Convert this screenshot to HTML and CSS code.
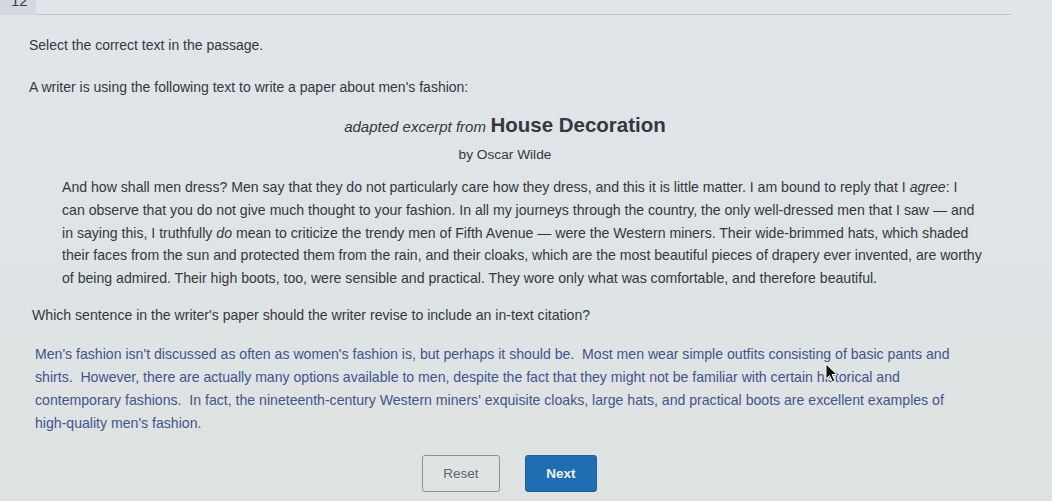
FILE: index.html
```html
<!DOCTYPE html>
<html lang="en">
<head>
<meta charset="utf-8">
<title>Select the correct text</title>
<link rel="stylesheet" href="styles.css">
</head>
<body>
<div class="topbar">
  <div class="qnum"><span class="qnum-text">12</span></div>
  <div class="rule"></div>
</div>
<main class="content">
  <p class="instr">Select the correct text in the passage.</p>
  <p class="intro">A writer is using the following text to write a paper about men's fashion:</p>
  <div class="source">
    <div class="title-line"><span class="adapted">adapted excerpt from</span> <span class="title">House Decoration</span></div>
    <div class="author">by Oscar Wilde</div>
  </div>
  <p class="passage">And how shall men dress? Men say that they do not particularly care how they dress, and this it is little matter. I am bound to reply that I <em>agree</em>: I<br>can observe that you do not give much thought to your fashion. In all my journeys through the country, the only well-dressed men that I saw — and<br>in saying this, I truthfully <em>do</em> mean to criticize the trendy men of Fifth Avenue — were the Western miners. Their wide-brimmed hats, which shaded<br>their faces from the sun and protected them from the rain, and their cloaks, which are the most beautiful pieces of drapery ever invented, are worthy<br>of being admired. Their high boots, too, were sensible and practical. They wore only what was comfortable, and therefore beautiful.</p>
  <p class="question">Which sentence in the writer's paper should the writer revise to include an in-text citation?</p>
  <div class="answer-wrap">
    <p class="answer"><span class="sent">Men's fashion isn't discussed as often as women's fashion is, but perhaps it should be.</span>&nbsp; <span class="sent">Most men wear simple outfits consisting of basic pants and<br>shirts.</span>&nbsp; <span class="sent">However, there are actually many options available to men, despite the fact that they might not be familiar with certain historical and<br>contemporary fashions.</span>&nbsp; <span class="sent">In fact, the nineteenth-century Western miners' exquisite cloaks, large hats, and practical boots are excellent examples of<br>high-quality men's fashion.</span></p>
    <svg class="cursor" width="14" height="20" viewBox="0 0 14 20"><path d="M1 1 L1 16 L4.5 12.5 L7.5 19 L10 18 L7 11.5 L12 11.5 Z" fill="#111" stroke="#fff" stroke-width="1"/></svg>
  </div>
  <div class="buttons">
    <button class="btn reset" type="button">Reset</button>
    <button class="btn next" type="button">Next</button>
  </div>
</main>
</body>
</html>
```
FILE: styles.css
```css
html, body {
  margin: 0;
  padding: 0;
}
body {
  width: 1052px;
  height: 501px;
  overflow: hidden;
  background: linear-gradient(180deg, #e1e5ea 0%, #dee3e5 60%, #dfe3e0 100%);
  font-family: "Liberation Sans", Arial, sans-serif;
  color: #33383d;
}
.topbar {
  display: flex;
  align-items: flex-end;
  height: 15px;
}
.qnum {
  width: 36px;
  height: 15px;
  background: #d3d9df;
  overflow: hidden;
  position: relative;
}
.qnum-text {
  position: absolute;
  left: 11px;
  bottom: 9px;
  font-size: 15px;
  line-height: 11px;
  color: #3a3f45;
}
.rule {
  width: 975px;
  height: 1px;
  background: #b9c1c9;
}
.content {
  padding: 0 0 0 29px;
}
p {
  margin: 0;
}
.instr {
  font-size: 14px;
  margin-top: 22px;
  line-height: 16px;
}
.intro {
  font-size: 14px;
  line-height: 16px;
  margin-top: 26px;
}
.source {
  text-align: center;
  width: 952px;
  margin-top: 18px;
}
.title-line {
  line-height: 24px;
}
.adapted {
  font-style: italic;
  font-size: 15px;
}
.title {
  font-weight: bold;
  font-size: 20.5px;
}
.author {
  font-size: 13.7px;
  line-height: 16px;
  margin-top: 8px;
}
.passage {
  font-size: 14.1px;
  line-height: 22.8px;
  margin-top: 13px;
  margin-left: 33px;
}
.question {
  font-size: 14.1px;
  line-height: 16px;
  margin-top: 17px;
  margin-left: 3px;
}
.answer-wrap {
  position: relative;
}
.answer {
  font-size: 14.1px;
  line-height: 23px;
  margin-top: 20px;
  margin-left: 6px;
  color: #3e5590;
}
.cursor {
  position: absolute;
  left: 796px;
  top: 20px;
}
.buttons {
  display: flex;
  gap: 25px;
  margin-top: 20px;
  margin-left: 393px;
}
.btn {
  font-family: "Liberation Sans", Arial, sans-serif;
  font-size: 13.5px;
  height: 37px;
  border-radius: 3px;
  padding: 0;
}
.reset {
  width: 78px;
  background: transparent;
  border: 1px solid #8a9198;
  color: #5c6670;
}
.next {
  width: 72px;
  background: #1f6db3;
  border: 1px solid #1a5f9e;
  color: #eef4fa;
  font-weight: bold;
}
```
